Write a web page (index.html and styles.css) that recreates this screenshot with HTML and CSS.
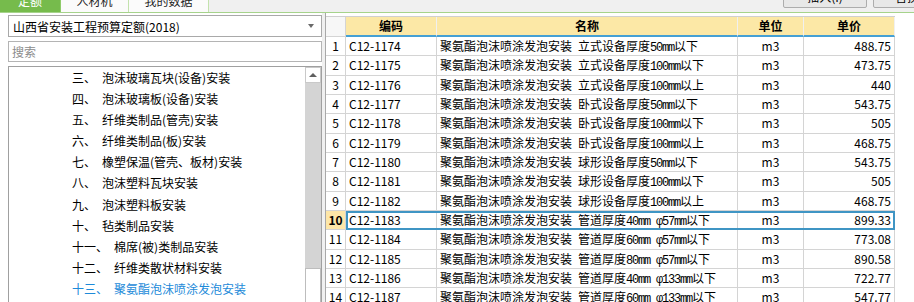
FILE: index.html
```html
<!DOCTYPE html>
<html lang="zh-CN">
<head>
  <meta charset="UTF-8">
  <title>定额</title>
  <link rel="stylesheet" href="styles.css">
</head>
<body>

  <div class="topbar">
    <div class="tab tab-quota active"><span class="tab-label">定额</span></div>
    <div class="tab tab-res"><span class="tab-label">人材机</span></div>
    <div class="tab tab-mine"><span class="tab-label">我的数据</span></div>
    <div class="actions">
      <button class="btn">插入(I)</button>
      <button class="btn">替换(R)</button>
    </div>
  </div>

  <div class="main">
    <div class="side">
      <div class="select">
        <span>山西省安装工程预算定额(2018)</span>
        <span class="caret"></span>
      </div>
      <div class="search">搜索</div>
      <div class="tree">
        <ul class="tree-list">
          <li><span class="no">三、</span>泡沫玻璃瓦块(设备)安装</li>
          <li><span class="no">四、</span>泡沫玻璃板(设备)安装</li>
          <li><span class="no">五、</span>纤维类制品(管壳)安装</li>
          <li><span class="no">六、</span>纤维类制品(板)安装</li>
          <li><span class="no">七、</span>橡塑保温(管壳、板材)安装</li>
          <li><span class="no">八、</span>泡沫塑料瓦块安装</li>
          <li><span class="no">九、</span>泡沫塑料板安装</li>
          <li><span class="no">十、</span>毡类制品安装</li>
          <li><span class="no">十一、</span>棉席(被)类制品安装</li>
          <li><span class="no">十二、</span>纤维类散状材料安装</li>
          <li class="current"><span class="no">十三、</span>聚氨酯泡沫喷涂发泡安装</li>
        </ul>
        <div class="vscroll">
          <div class="arrow-up"></div>
          <div class="track"></div>
          <div class="thumb"></div>
        </div>
      </div>
    </div>

    <div class="splitter"></div>

    <div class="grid">
      <div class="row head">
        <div class="num"></div>
        <div class="rec">
          <div class="c code">编码</div>
          <div class="c name">名称</div>
          <div class="c unit">单位</div>
          <div class="c price">单价</div>
        </div>
      </div>
      <div class="row">
        <div class="num">1</div>
        <div class="rec"><div class="c code">C12-1174</div><div class="c name">聚氨酯泡沫喷涂发泡安装&ensp;立式设备厚度<span class="en">50mm</span>以下</div><div class="c unit">m3</div><div class="c price">488.75</div></div>
      </div>
      <div class="row">
        <div class="num">2</div>
        <div class="rec"><div class="c code">C12-1175</div><div class="c name">聚氨酯泡沫喷涂发泡安装&ensp;立式设备厚度<span class="en">100mm</span>以下</div><div class="c unit">m3</div><div class="c price">473.75</div></div>
      </div>
      <div class="row">
        <div class="num">3</div>
        <div class="rec"><div class="c code">C12-1176</div><div class="c name">聚氨酯泡沫喷涂发泡安装&ensp;立式设备厚度<span class="en">100mm</span>以上</div><div class="c unit">m3</div><div class="c price">440</div></div>
      </div>
      <div class="row">
        <div class="num">4</div>
        <div class="rec"><div class="c code">C12-1177</div><div class="c name">聚氨酯泡沫喷涂发泡安装&ensp;卧式设备厚度<span class="en">50mm</span>以下</div><div class="c unit">m3</div><div class="c price">543.75</div></div>
      </div>
      <div class="row">
        <div class="num">5</div>
        <div class="rec"><div class="c code">C12-1178</div><div class="c name">聚氨酯泡沫喷涂发泡安装&ensp;卧式设备厚度<span class="en">100mm</span>以下</div><div class="c unit">m3</div><div class="c price">505</div></div>
      </div>
      <div class="row">
        <div class="num">6</div>
        <div class="rec"><div class="c code">C12-1179</div><div class="c name">聚氨酯泡沫喷涂发泡安装&ensp;卧式设备厚度<span class="en">100mm</span>以上</div><div class="c unit">m3</div><div class="c price">468.75</div></div>
      </div>
      <div class="row">
        <div class="num">7</div>
        <div class="rec"><div class="c code">C12-1180</div><div class="c name">聚氨酯泡沫喷涂发泡安装&ensp;球形设备厚度<span class="en">50mm</span>以下</div><div class="c unit">m3</div><div class="c price">543.75</div></div>
      </div>
      <div class="row">
        <div class="num">8</div>
        <div class="rec"><div class="c code">C12-1181</div><div class="c name">聚氨酯泡沫喷涂发泡安装&ensp;球形设备厚度<span class="en">100mm</span>以下</div><div class="c unit">m3</div><div class="c price">505</div></div>
      </div>
      <div class="row">
        <div class="num">9</div>
        <div class="rec"><div class="c code">C12-1182</div><div class="c name">聚氨酯泡沫喷涂发泡安装&ensp;球形设备厚度<span class="en">100mm</span>以上</div><div class="c unit">m3</div><div class="c price">468.75</div></div>
      </div>
      <div class="row sel">
        <div class="num">10</div>
        <div class="rec"><div class="c code">C12-1183</div><div class="c name">聚氨酯泡沫喷涂发泡安装&ensp;管道厚度<span class="en">40mm φ57mm</span>以下</div><div class="c unit">m3</div><div class="c price">899.33</div></div>
      </div>
      <div class="row">
        <div class="num">11</div>
        <div class="rec"><div class="c code">C12-1184</div><div class="c name">聚氨酯泡沫喷涂发泡安装&ensp;管道厚度<span class="en">60mm φ57mm</span>以下</div><div class="c unit">m3</div><div class="c price">773.08</div></div>
      </div>
      <div class="row">
        <div class="num">12</div>
        <div class="rec"><div class="c code">C12-1185</div><div class="c name">聚氨酯泡沫喷涂发泡安装&ensp;管道厚度<span class="en">80mm φ57mm</span>以下</div><div class="c unit">m3</div><div class="c price">890.58</div></div>
      </div>
      <div class="row">
        <div class="num">13</div>
        <div class="rec"><div class="c code">C12-1186</div><div class="c name">聚氨酯泡沫喷涂发泡安装&ensp;管道厚度<span class="en">40mm φ133mm</span>以下</div><div class="c unit">m3</div><div class="c price">722.77</div></div>
      </div>
      <div class="row">
        <div class="num">14</div>
        <div class="rec"><div class="c code">C12-1187</div><div class="c name">聚氨酯泡沫喷涂发泡安装&ensp;管道厚度<span class="en">60mm φ133mm</span>以下</div><div class="c unit">m3</div><div class="c price">547.77</div></div>
      </div>
    </div>
  </div>

</body>
</html>
```

FILE: styles.css
```css
* { box-sizing: border-box; }

body {
  margin: 0;
  width: 914px;
  height: 302px;
  overflow: hidden;
  background: #fff;
  color: #000;
  font-family: "Noto Sans CJK SC", "Liberation Sans", sans-serif;
  font-size: 12px;
}

/* top tab bar, mostly scrolled out of view */
.topbar {
  display: flex;
  align-items: flex-start;
  height: 13px;
  background: #f0f0f0;
  border-bottom: 1px solid #a6d38b;
  overflow: hidden;
}
.tab {
  height: 12px;
  line-height: 14px;
  text-align: center;
  background: #fbfbfb;
  border-right: 1px solid #c3e2ad;
  color: #222;
  overflow: hidden;
}
.tab-label { display: block; margin-top: -6px; }
.tab-quota { width: 61px; }
.tab-res { width: 68px; }
.tab-mine { width: 80px; }
.tab.active { background: #76bb4c; color: #fff; border-right-color: #8fcb6a; }

.actions {
  display: flex;
  gap: 6px;
  margin-left: auto;
  margin-right: -43px;
}
.btn {
  width: 84px;
  height: 22px;
  margin-top: -14px;
  padding: 0;
  border: 1px solid #adadad;
  border-radius: 2px;
  background: #e8e8e8;
  font: inherit;
  line-height: 20px;
  color: #000;
}

.main {
  display: flex;
  height: 289px;
}

/* left side: catalogue */
.side {
  width: 322px;
  padding: 2px 0 0 8px;
}
.select {
  display: flex;
  align-items: center;
  justify-content: space-between;
  height: 22px;
  padding: 0 7px 0 4px;
  border: 1px solid #a9a9a9;
  background: #fff;
}
.caret {
  width: 0;
  height: 0;
  border-left: 3px solid transparent;
  border-right: 3px solid transparent;
  border-top: 4px solid #6a6a6a;
}
.search {
  height: 21px;
  margin-top: 4px;
  padding-left: 3px;
  line-height: 19px;
  border: 1px solid #b4b4b4;
  color: #8c8c8c;
}
.tree {
  display: flex;
  height: 240px;
  margin-top: 4px;
  border: 1px solid #a0a0a0;
  border-bottom: none;
}
.tree-list {
  flex: 1;
  margin: 0;
  padding: 0 0 0 63px;
  list-style: none;
  white-space: nowrap;
}
.tree-list li {
  height: 21.1px;
  line-height: 21.1px;
}
.tree-list .no { margin-right: 6px; }
.tree-list .current { color: #1d8ad9; }

.vscroll {
  display: flex;
  flex-direction: column;
  width: 16px;
  background: #d4d4d4;
}
.arrow-up {
  display: flex;
  align-items: center;
  justify-content: center;
  height: 16px;
  background: #fff;
  border: 1px solid #c9c9c9;
}
.arrow-up::before {
  content: "";
  border-left: 4px solid transparent;
  border-right: 4px solid transparent;
  border-bottom: 4px solid #5f5f5f;
}
.track { flex: 1; }
.thumb {
  height: 38px;
  background: #fff;
  border: 1px solid #bdbdbd;
}

.splitter {
  width: 4px;
  background: #f0f0f0;
  border-right: 1px solid #a8a8a8;
}

/* right side: quota grid */
.grid {
  width: 569px;
  margin-top: 3px;
  border-top: 1px solid #cfcfcf;
}
.row {
  display: flex;
  height: 19.35px;
  line-height: 18px;
}
.num {
  width: 20px;
  text-align: center;
  border-right: 1px solid #d4d4d4;
  border-bottom: 1px solid #d4d4d4;
}
.rec { display: flex; }
.c {
  border-right: 1px solid #d4d4d4;
  border-bottom: 1px solid #d4d4d4;
  padding: 0 3px;
  white-space: nowrap;
  overflow: hidden;
}
.code { width: 91px; }
.name { width: 301px; }
.unit { width: 66px; text-align: center; }
.price { width: 91px; text-align: right; }

/* half-width latin runs inside the names */
.en {
  font-family: "Liberation Mono", monospace;
  font-size: 12px;
  letter-spacing: -1.2px;
}

.row.head { height: 20px; line-height: 18px; }
.head .num { background: #f7f7f7; }
.head .c {
  background: #fce8a6;
  border-bottom: 2px solid #45a0d4;
  border-right-color: #f0f0f0;
  text-align: center;
  font-weight: bold;
}

.sel .num { background: #fde6a8; font-weight: bold; }
.sel .rec { outline: 2px solid #3f95c4; outline-offset: -2px; }
```
